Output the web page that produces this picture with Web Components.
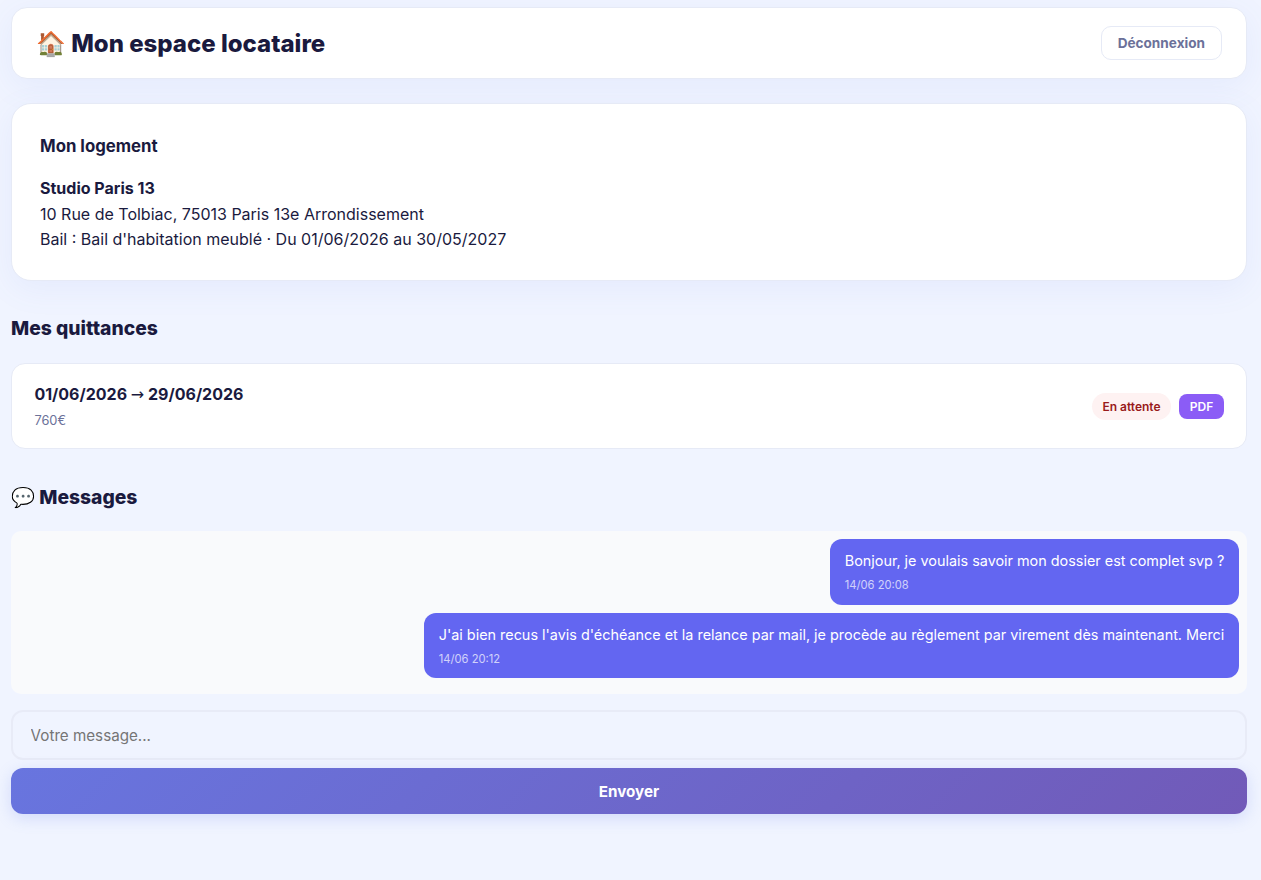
<!DOCTYPE html>
<html lang="fr">
<head>
<meta charset="utf-8">
<title>Mon espace locataire</title>
<style>
html {
  background: #f0f4ff;
}

body {
  margin: 0;
  font: 16px/1.6 Inter, "Liberation Sans", "Noto Color Emoji", sans-serif;
  color: #1a1a3e;
  --muted: #6b7199;
  --border: #e6eaf6;
  --shadow: 0 8px 32px rgba(102, 126, 234, 0.08);
}
</style>
</head>
<body>
<tenant-space></tenant-space>

<script>
const define = (name, css, html, setup = () => {}) => {
  const template = document.createElement('template');
  template.innerHTML = `<style>*, :host { box-sizing: border-box; }${css}</style>${html}`;
  customElements.define(name, class extends HTMLElement {
    constructor() {
      super();
      this.attachShadow({ mode: 'open' });
      this.shadowRoot.append(template.content.cloneNode(true));
    }

    connectedCallback() {
      setup(this);
    }
  });
};

define('page-header', `
:host {
  display: flex;
  align-items: center;
  justify-content: space-between;
  height: 72px;
  padding: 0 24px;
  background: white;
  border: 1px solid var(--border);
  border-radius: 16px;
  box-shadow: var(--shadow);
}

h1 {
  margin: 0;
  padding-top: 1px;
  font-size: 24px;
  font-weight: 800;
  line-height: 38px;
}
`, '<h1><slot></slot></h1><slot name="action"></slot>');

define('ghost-button', `
:host { display: block; }

button {
  display: block;
  height: 34px;
  padding: 0 16px 1px;
  background: white;
  border: 1px solid var(--border);
  border-radius: 10px;
  color: var(--muted);
  font: 700 13.6px Inter, sans-serif;
}
`, '<button><slot></slot></button>');

define('home-card', `
:host {
  display: block;
  height: 178px;
  margin-top: 24px;
  padding: 29px 28px 27px;
  background: white;
  border: 1px solid var(--border);
  border-radius: 20px;
  box-shadow: var(--shadow);
}

h3 {
  margin: 0 0 16px;
  font-size: 16.8px;
  font-weight: 700;
  line-height: 27px;
}

p { margin: 0; }
`, '<h3><slot name="title"></slot></h3><p><slot></slot></p>');

define('section-title', `
:host { display: block; }

h2 {
  margin: 0;
  font-size: 19.3px;
  font-weight: 800;
  line-height: 31px;
}
`, '<h2><slot></slot></h2>');

define('receipt-row', `
:host {
  display: flex;
  align-items: center;
  justify-content: space-between;
  height: 86px;
  padding: 1px 22px 0 22.4px;
  background: white;
  border: 1px solid var(--border);
  border-radius: 14px;
}

.period {
  padding-top: 1px;
  font-weight: 700;
}

.amount {
  margin-top: 2px;
  color: var(--muted);
  font-size: 12.8px;
  line-height: 22px;
}

.arrow {
  font-family: "DejaVu Sans", sans-serif;
  font-weight: 400;
  line-height: 1;
}

.side {
  display: flex;
  align-items: center;
  gap: 8px;
}
`, `
<div>
  <div class="period"><slot name="from"></slot> <span class="arrow">→</span> <slot name="to"></slot></div>
  <div class="amount"><slot name="amount"></slot></div>
</div>
<div class="side"><slot name="side"></slot></div>
`);

define('status-badge', `
:host {
  display: block;
  padding: 4px 10.4px;
  background: #fef2f2;
  border-radius: 20px;
  color: #991b1b;
  font-size: 12px;
  font-weight: 600;
  line-height: 19px;
}
`, '<slot></slot>');

define('pdf-button', `
:host { display: block; }

button {
  display: block;
  height: 25px;
  padding: 0 10.8px;
  background: #8b5cf6;
  border: 0;
  border-radius: 8px;
  color: white;
  font: 600 12px Inter, sans-serif;
}
`, '<button><slot></slot></button>');

define('message-list', `
:host {
  display: flex;
  flex-direction: column;
  align-items: flex-end;
  gap: 8px;
  height: 163px;
  padding: 8px;
  background: #f9fafc;
  border-radius: 10px;
}
`, '<slot></slot>');

define('message-bubble', `
:host {
  display: block;
  padding: 10px 14.7px;
  background: #6366f1;
  border-radius: 12px;
  color: white;
  font-size: 14.4px;
}

.time {
  margin-top: 4px;
  font-size: 11.2px;
  line-height: 18.4px;
  opacity: 0.7;
}
`, '<slot></slot><div class="time"></div>', host => {
  host.shadowRoot.querySelector('.time').textContent = host.getAttribute('time');
});

define('message-form', `
:host {
  display: flex;
  flex-direction: column;
  gap: 8px;
  margin-top: 16px;
}

input, button {
  display: block;
  width: 100%;
  border-radius: 12px;
}

input {
  height: 50px;
  padding: 0 17.6px;
  background: transparent;
  border: 2px solid #e8ebf7;
  font: 15.2px Inter, sans-serif;
}

input::placeholder { color: #757575; }

button {
  height: 46px;
  border: 0;
  background: linear-gradient(135deg, #6875df, #715ab8);
  box-shadow: 0 4px 16px rgba(102, 126, 234, 0.22);
  color: white;
  font: 700 15.2px Inter, sans-serif;
}
`, `
<input placeholder="Votre message...">
<button><slot></slot></button>
`);

define('tenant-space', `
:host {
  display: block;
  padding: 7px 14px 66px 11px;
}

section-title { margin: 32px 0 19px; }
section-title.messages { margin: 33px 0 18.3px; }
`, `
<page-header>
  🏠 Mon espace locataire
  <ghost-button slot="action">Déconnexion</ghost-button>
</page-header>
<home-card>
  <span slot="title">Mon logement</span>
  <strong>Studio Paris 13</strong><br>
  10 Rue de Tolbiac, 75013 Paris 13e Arrondissement<br>
  Bail : Bail d'habitation meublé · Du 01/06/2026 au 30/05/2027
</home-card>
<section-title>Mes quittances</section-title>
<receipt-row>
  <span slot="from">01/06/2026</span>
  <span slot="to">29/06/2026</span>
  <span slot="amount">760€</span>
  <status-badge slot="side">En attente</status-badge>
  <pdf-button slot="side">PDF</pdf-button>
</receipt-row>
<section-title class="messages">💬 Messages</section-title>
<message-list>
  <message-bubble time="14/06 20:08">Bonjour, je voulais savoir mon dossier est complet svp ?</message-bubble>
  <message-bubble time="14/06 20:12">J'ai bien recus l'avis d'échéance et la relance par mail, je procède au règlement par virement dès maintenant. Merci</message-bubble>
</message-list>
<message-form>Envoyer</message-form>
`);
</script>
</body>
</html>
